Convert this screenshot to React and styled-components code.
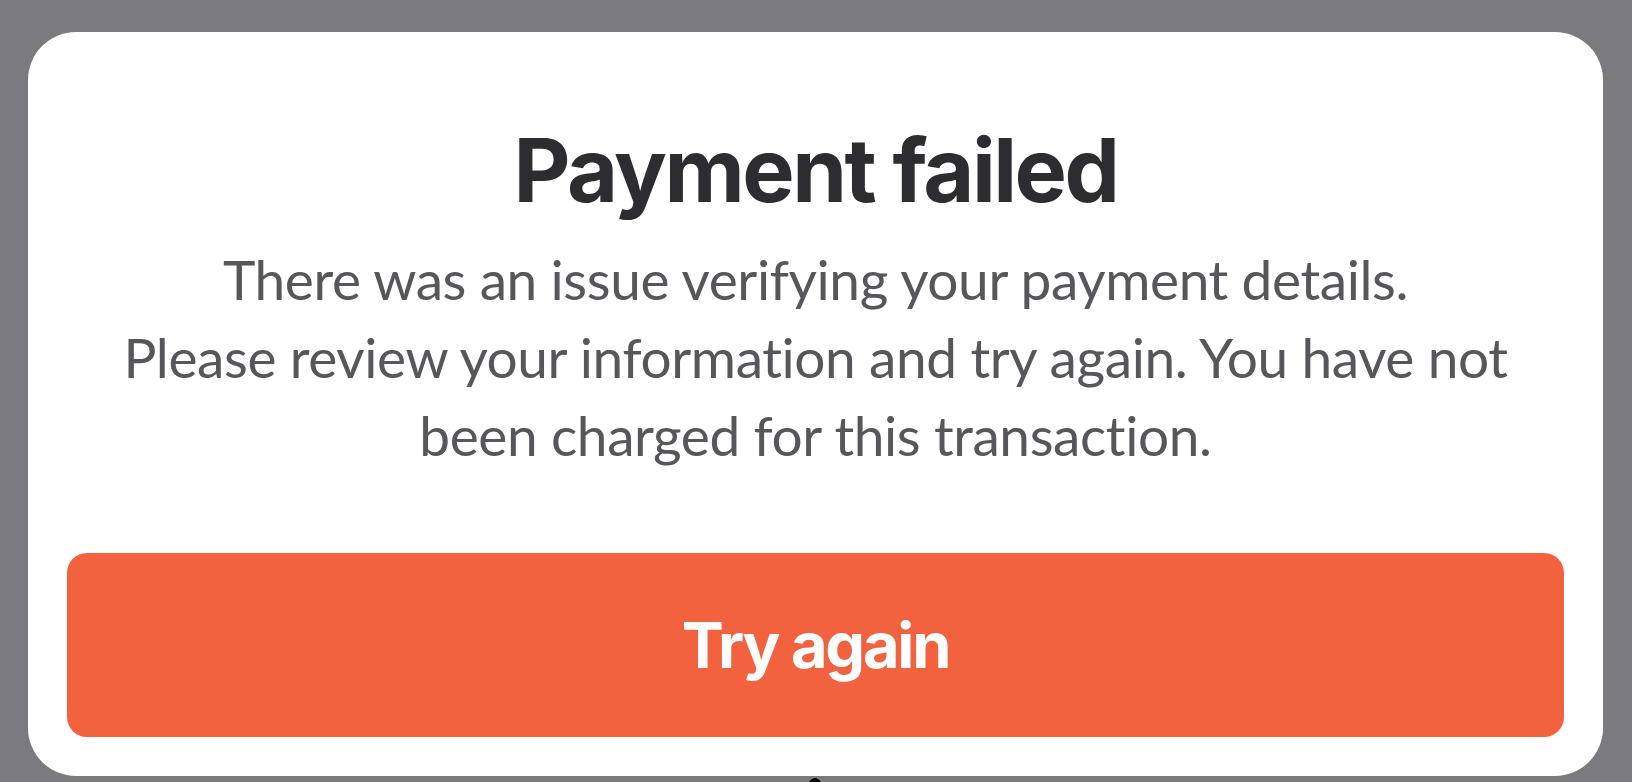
import React from "react";
import styled, { createGlobalStyle } from "styled-components";

const GlobalStyle = createGlobalStyle`
  html, body {
    margin: 0;
    padding: 0;
    background: #7b7a7f;
  }
  * { box-sizing: border-box; }
`;

const Backdrop = styled.div`
  position: relative;
  width: 1632px;
  height: 782px;
  padding: 32px 29px 6px 28px;
  background: #7b7a7f;
  font-family: Inter, "Open Sans", sans-serif;
`;

const Modal = styled.div`
  height: 744px;
  background: #ffffff;
  border-radius: 48px;
  padding: 94px 39px 39px;
  display: flex;
  flex-direction: column;
  align-items: center;
`;

const Title = styled.h1`
  margin: 0;
  font-size: 88px;
  line-height: 88px;
  font-weight: 700;
  color: #2c2c31;
  letter-spacing: -2.5px;
`;

const Message = styled.p`
  margin: 26px 0 0;
  font-family: Lato, Inter, sans-serif;
  font-size: 55px;
  line-height: 78px;
  font-weight: 400;
  color: #56565b;
  text-align: center;
  letter-spacing: -0.4px;
  font-variant-ligatures: none;
  font-feature-settings: "liga" 0;
`;

const PrimaryButton = styled.button`
  margin-top: auto;
  width: 100%;
  height: 184px;
  border: none;
  border-radius: 20px;
  background: #f2623f;
  color: #ffffff;
  font-family: inherit;
  font-size: 63px;
  font-weight: 700;
  letter-spacing: -2.2px;
  cursor: pointer;
`;

const Pointer = styled.svg`
  position: absolute;
  left: 809px;
  bottom: 0;
`;

export default function App() {
  return (
    <>
      <GlobalStyle />
      <Backdrop>
        <Modal>
          <Title>Payment failed</Title>
          <Message>
            There was an issue verifying your payment details.
            <br />
            Please review your information and try again. You have not
            <br />
            been charged for this transaction.
          </Message>
          <PrimaryButton>Try again</PrimaryButton>
        </Modal>
        <Pointer width="12" height="6" viewBox="0 0 12 6">
          <path d="M0 6 Q6 -2 12 6 Z" fill="#000" />
        </Pointer>
      </Backdrop>
    </>
  );
}
